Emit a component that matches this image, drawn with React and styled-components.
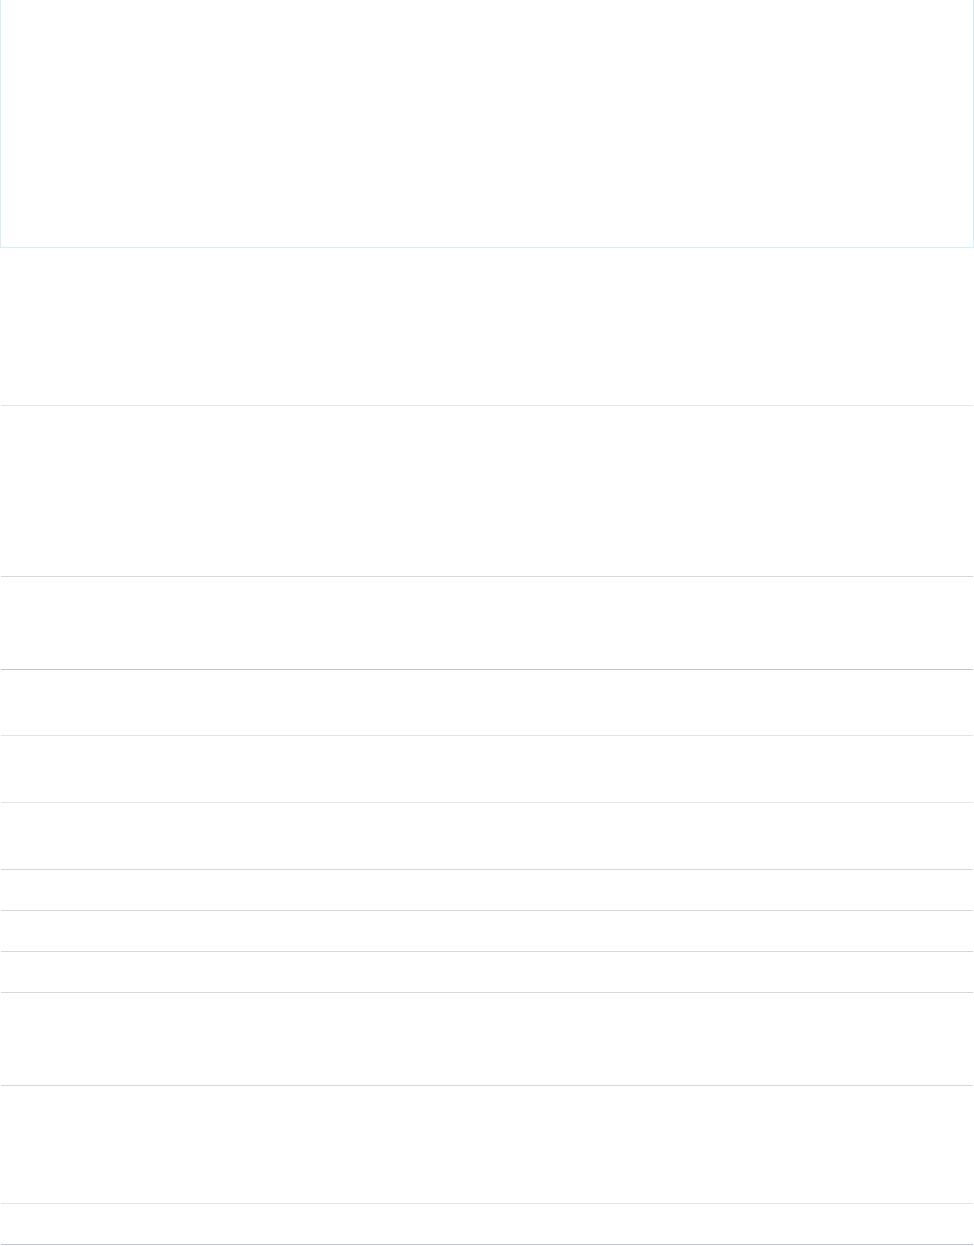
import styled, { createGlobalStyle } from "styled-components";

const GlobalStyle = createGlobalStyle`
  html, body {
    margin: 0;
    padding: 0;
    background: #fff;
    font-family: "Liberation Sans", Arial, sans-serif;
  }
`;

const Page = styled.div`
  display: flex;
  flex-direction: column;
  width: 974px;
`;

const Hero = styled.section`
  box-sizing: border-box;
  height: 248px;
  border: 1px solid #d6eef5;
  border-top: none;
`;

const List = styled.div`
  display: flex;
  flex-direction: column;
  margin: 0 1px;
`;

const tones = {
  light: "#dfe5e9",
  mid: "#cfd9df",
  dark: "#bcc7cd",
};

const Row = styled.div`
  box-sizing: border-box;
  height: ${({ $h }) => $h}px;
  border-bottom: 1px solid ${({ $tone }) => tones[$tone] || tones.light};
`;

const rows = [
  { h: 158, tone: "light" },
  { h: 171, tone: "mid" },
  { h: 93, tone: "dark" },
  { h: 66, tone: "light" },
  { h: 67, tone: "light" },
  { h: 67, tone: "mid" },
  { h: 41, tone: "mid" },
  { h: 41, tone: "mid" },
  { h: 41, tone: "mid" },
  { h: 93, tone: "mid" },
  { h: 118, tone: "light" },
  { h: 41, tone: "dark" },
];

export default function App() {
  return (
    <>
      <GlobalStyle />
      <Page>
        <Hero />
        <List>
          {rows.map((r, i) => (
            <Row key={i} $h={r.h} $tone={r.tone} />
          ))}
        </List>
      </Page>
    </>
  );
}
